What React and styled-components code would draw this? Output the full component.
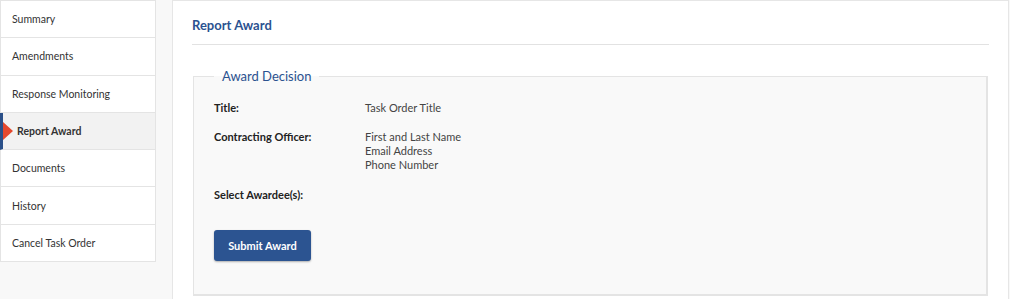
import React from "react";
import styled, { createGlobalStyle } from "styled-components";

const GlobalStyle = createGlobalStyle`
  html, body {
    margin: 0;
    padding: 0;
    background: #f8f8f8;
    font-family: Lato, "Open Sans", "Liberation Sans", sans-serif;
    color: #333;
  }
`;

const navItems = [
  "Summary",
  "Amendments",
  "Response Monitoring",
  "Report Award",
  "Documents",
  "History",
  "Cancel Task Order",
];

const App = () => {
  const active = "Report Award";

  return (
    <>
      <GlobalStyle />
      <Page>
        <Sidebar>
          {navItems.map((item) => (
            <NavItem key={item} active={item === active}>
              {item === active && <Arrow />}
              {item}
            </NavItem>
          ))}
        </Sidebar>

        <Main>
          <Heading>Report Award</Heading>
          <Divider />

          <Fieldset>
            <Legend>Award Decision</Legend>
            <Row>
              <Label>Title:</Label>
              <Value>Task Order Title</Value>
            </Row>
            <Row>
              <Label>Contracting Officer:</Label>
              <Value>
                First and Last Name
                <br />
                Email Address
                <br />
                Phone Number
              </Value>
            </Row>
            <Row>
              <Label>Select Awardee(s):</Label>
              <Value />
            </Row>
            <Button>Submit Award</Button>
          </Fieldset>
        </Main>
      </Page>
    </>
  );
};

export default App;

const Page = styled.div`
  display: flex;
  align-items: flex-start;
  gap: 16px;
  height: 299px;
  overflow: hidden;
`;

const Sidebar = styled.ul`
  list-style: none;
  margin: 0;
  padding: 0;
  width: 154px;
  flex-shrink: 0;
  background: #fff;
  border: 1px solid #e4e4e4;
  border-bottom: none;
`;

const NavItem = styled.li`
  position: relative;
  display: flex;
  align-items: center;
  height: 36.3px;
  padding-left: ${(p) => (p.active ? "14px" : "11px")};
  border-bottom: 1px solid #e4e4e4;
  border-left: ${(p) => (p.active ? "3px solid #2b5089" : "none")};
  margin-left: ${(p) => (p.active ? "-1px" : "0")};
  background: ${(p) => (p.active ? "#f2f2f2" : "#fff")};
  font-size: 10.5px;
  font-weight: ${(p) => (p.active ? 700 : 400)};
  color: #333;
`;

const Arrow = styled.span`
  position: absolute;
  left: 0;
  top: 50%;
  transform: translateY(-50%);
  width: 0;
  height: 0;
  border-top: 9px solid transparent;
  border-bottom: 9px solid transparent;
  border-left: 10px solid #e5482e;
`;

const Main = styled.div`
  flex: 1;
  margin-right: 1px;
  height: 320px;
  background: #fff;
  border: 1px solid #e6e6e6;
  padding: 0 19px 0 19px;
`;

const Heading = styled.h2`
  margin: 0;
  padding-top: 16px;
  height: 27px;
  font-size: 13px;
  font-weight: 700;
  color: #2b5290;
`;

const Divider = styled.hr`
  margin: 0;
  border: none;
  border-top: 1px solid #e2e2e2;
`;

const Fieldset = styled.fieldset`
  margin: 23px 1px 0 1px;
  padding: 17px 20px 33px 20px;
  background: #f9f9f9;
  border: 1px solid #e4e4e4;
  border-width: 1px 2px 2px 1px;
`;

const Legend = styled.legend`
  margin-left: 0;
  padding: 0 8px;
  font-size: 13px;
  color: #2b5290;
`;

const Row = styled.div`
  display: grid;
  grid-template-columns: 151px 1fr;
  margin-bottom: 15px;
  font-size: 11px;
  line-height: 14px;

  &:nth-of-type(2) {
    margin-bottom: 16px;
  }
`;

const Label = styled.div`
  font-weight: 700;
  color: #222;
`;

const Value = styled.div`
  color: #444;
  min-height: 14px;
`;

const Button = styled.button`
  margin-top: 13px;
  width: 97px;
  height: 31px;
  border: none;
  border-radius: 3px;
  background: #2c5491;
  color: #fff;
  font-family: inherit;
  font-size: 11px;
  font-weight: 700;
  box-shadow: 0 1px 2px rgba(0, 0, 0, 0.3);
  cursor: pointer;
`;
